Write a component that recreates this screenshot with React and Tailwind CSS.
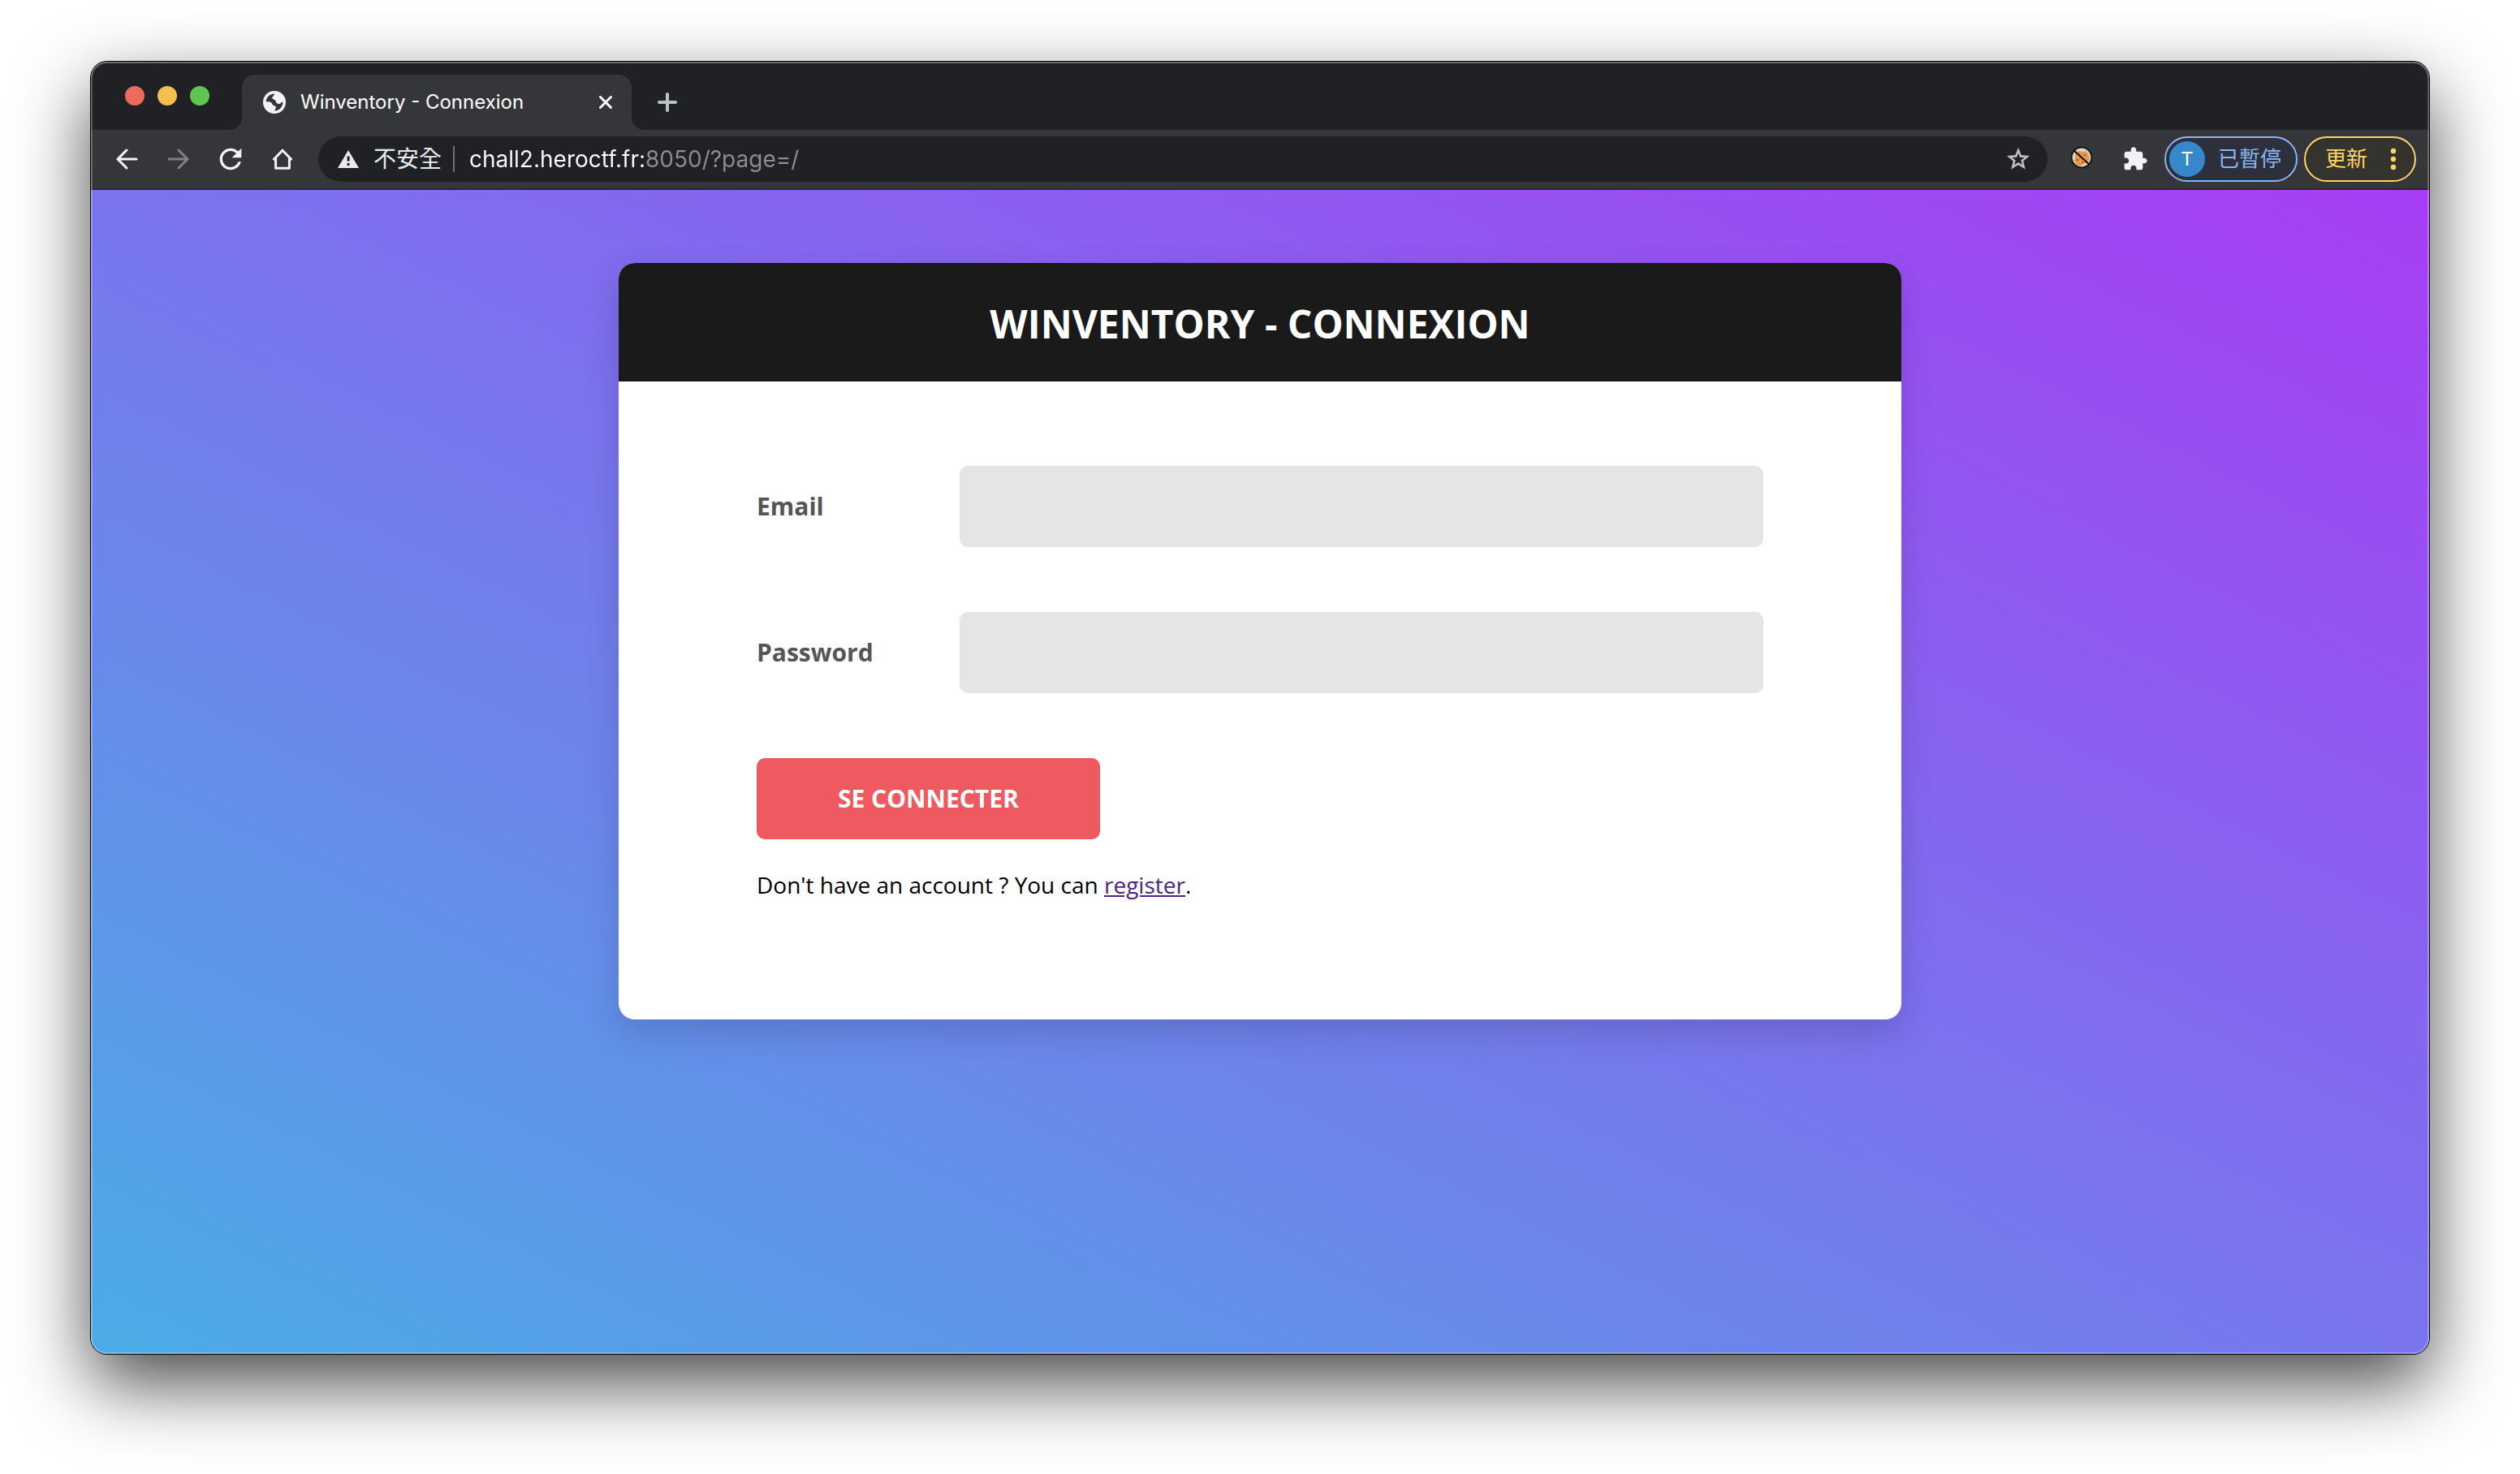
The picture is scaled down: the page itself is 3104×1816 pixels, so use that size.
const chromeFont = "font-['Inter','Noto_Sans_CJK_TC',sans-serif]";

function IconButton({ label, children }) {
  return (
    <button type="button" aria-label={label} className="flex size-16 shrink-0 items-center justify-center">
      {children}
    </button>
  );
}

function GlobeIcon() {
  return (
    <svg className="size-7 shrink-0" viewBox="0 0 86 86" aria-hidden="true">
      <circle cx="43" cy="43" r="43" fill="#f1f3f4" />
      <path
        d="M11 41C12 25 25 12 43 11C43 19 35 20 35 27C35 33 45 31 47 37C49 43 51 49 59 49C67 49 67 42 75 42C75 59 63 74 45 75C43 69 51 67 49 61C47 55 37 57 35 51C33 43 27 41 11 41Z"
        fill="#35363a"
      />
    </svg>
  );
}

function CookieIcon() {
  return (
    <svg className="size-7 shrink-0" viewBox="0 0 28 28" aria-hidden="true">
      <circle cx="14" cy="14" r="12.4" fill="#d9d6d2" stroke="#1c1410" strokeWidth="2" />
      <path d="M6 9l4-3 5 1 4-1 4 5 1 5-3 5-5 1-3 3-5-2-3-5 1-4z" fill="#e8994a" />
      <g fill="#9a5c2a">
        <circle cx="11" cy="10" r="1.3" />
        <circle cx="18" cy="11" r="1.2" />
        <circle cx="9" cy="17" r="1.3" />
        <circle cx="15" cy="20" r="1.2" />
      </g>
      <path d="M4.600 5.600L23.400 22.600" stroke="#120c08" strokeWidth="2" />
    </svg>
  );
}

function TabStrip() {
  return (
    <div className="flex h-[84px] items-end bg-[#202124]">
      <div className="flex h-[84px] items-center gap-4 pr-6 pl-[42px]">
        <button type="button" aria-label="Close window" className="size-6 rounded-full bg-[#ed6a5e]" />
        <button type="button" aria-label="Minimize window" className="size-6 rounded-full bg-[#f5bf4f]" />
        <button type="button" aria-label="Zoom window" className="size-6 rounded-full bg-[#61c554]" />
      </div>
      <div className="size-4 shrink-0 bg-[radial-gradient(circle_at_0_0,transparent_16px,#35363a_16px)]" />
      <div className="flex h-[68px] w-[480px] items-center rounded-t-[16px] bg-[#35363a] pr-6 pl-[26px]">
        <GlobeIcon />
        <span className="ml-[18px] flex-1 truncate text-[24px] leading-8 text-white">Winventory - Connexion</span>
        <button type="button" aria-label="Close tab" className="flex size-4 items-center justify-center">
          <svg className="size-4" viewBox="0 0 16 16" fill="none" stroke="#fff" strokeWidth="3" strokeLinecap="round" aria-hidden="true">
            <path d="M1.500 1.500l13 13M14.500 1.500l-13 13" />
          </svg>
        </button>
      </div>
      <div className="size-4 shrink-0 bg-[radial-gradient(circle_at_100%_0,transparent_16px,#35363a_16px)]" />
      <button type="button" aria-label="New tab" className="flex h-[68px] w-14 items-center justify-center">
        <svg className="size-6" viewBox="0 0 24 24" fill="none" stroke="#bdc1c6" strokeWidth="4" strokeLinecap="round" aria-hidden="true">
          <path d="M12 2v20M2 12h20" />
        </svg>
      </button>
    </div>
  );
}

function Toolbar() {
  return (
    <div className="flex h-[74px] items-center border-b-2 border-[#28292c] bg-[#35363a] pr-4 pl-3">
      <IconButton label="Back">
        <svg className="size-7" viewBox="0 0 28 28" fill="none" stroke="#f1f3f4" strokeWidth="3" strokeLinecap="round" aria-hidden="true">
          <path d="M14 3L3 14l11 11M3 14h23" />
        </svg>
      </IconButton>
      <IconButton label="Forward">
        <svg className="size-7" viewBox="0 0 28 28" fill="none" stroke="#808184" strokeWidth="3" strokeLinecap="round" aria-hidden="true">
          <path d="M14 3l11 11-11 11M25 14H2" />
        </svg>
      </IconButton>
      <IconButton label="Reload">
        <svg className="size-10" viewBox="0 0 24 24" fill="#f1f3f4" aria-hidden="true">
          <path d="M17.65 6.35C16.2 4.9 14.21 4 12 4c-4.42 0-7.99 3.58-7.99 8s3.57 8 7.99 8c3.73 0 6.84-2.55 7.73-6h-2.08c-.82 2.33-3.04 4-5.65 4-3.31 0-6-2.69-6-6s2.69-6 6-6c1.66 0 3.14.69 4.22 1.78L13 11h7V4l-2.35 2.35z" />
        </svg>
      </IconButton>
      <IconButton label="Home">
        <svg className="size-7" viewBox="0 0 28 28" fill="none" stroke="#f1f3f4" strokeWidth="3" strokeLinejoin="round" aria-hidden="true">
          <path d="M2.6 15L14 3.2L25.4 15M5.6 12.8V25.2H22.4V12.8" />
        </svg>
      </IconButton>

      <div className="ml-3 flex h-14 flex-1 items-center rounded-full bg-[#202124] pr-[22px] pl-6">
        <svg className="size-[26px] shrink-0" viewBox="0 0 26 26" aria-hidden="true">
          <path d="M13 2L26 24H0z" fill="#e8eaed" />
          <path d="M11.6 9.5h3v6h-3zM11.6 18h3v3h-3z" fill="#202124" />
        </svg>
        <span className="ml-[18px] text-[28px] leading-10 whitespace-nowrap text-[#e8eaed]">不安全</span>
        <span className="ml-[14px] h-8 w-0.5 bg-[#6f7073]" />
        <input
          aria-label="Address"
          defaultValue="chall2.heroctf.fr:8050/?page=/"
          className="ml-[18px] h-10 min-w-0 flex-1 bg-[linear-gradient(90deg,#fff_216px,#8d8e91_216px)] bg-clip-text text-[28px] leading-10 text-transparent outline-none"
        />
        <button type="button" aria-label="Bookmark this page">
          <svg className="size-7" viewBox="0 0 28 28" fill="none" stroke="#bdc1c6" strokeWidth="2.6" aria-hidden="true">
            <path d="M14 3.2L16.9 10.4L24.8 11L18.8 16L20.7 23.8L14 19.6L7.3 23.8L9.2 16L3.2 11L11.1 10.4Z" />
          </svg>
        </button>
      </div>

      <button type="button" aria-label="Cookie blocker" className="ml-7 pb-1">
        <CookieIcon />
      </button>
      <button type="button" aria-label="Extensions" className="ml-9">
        <svg className="size-8" viewBox="0 0 24 24" fill="#f1f3f4" aria-hidden="true">
          <path d="M20.5 11H19V7c0-1.1-.9-2-2-2h-4V3.500C13 2.120 11.880 1 10.500 1S8 2.120 8 3.500V5H4c-1.100 0-1.990.9-1.990 2v3.800H3.500c1.490 0 2.700 1.210 2.700 2.700s-1.210 2.700-2.700 2.700H2V20c0 1.100.9 2 2 2h3.800v-1.500c0-1.490 1.210-2.700 2.700-2.700s2.700 1.210 2.700 2.700V22H17c1.100 0 2-.9 2-2v-4h1.500c1.380 0 2.500-1.120 2.500-2.500S21.880 11 20.500 11z" />
        </svg>
      </button>
      <button type="button" className="ml-5 flex h-14 items-center rounded-full border-2 border-[#8ab4f8] bg-[#2d303b] pr-[18px] pl-1">
        <span className="flex size-11 items-center justify-center rounded-full bg-[#3788cb] font-['Roboto',sans-serif] text-[24px] leading-8 text-white">T</span>
        <span className="ml-4 text-[26px] leading-10 whitespace-nowrap text-[#8ab4f8]">已暫停</span>
      </button>
      <button type="button" className="ml-2 flex h-14 items-center rounded-full border-2 border-[#fdd663] bg-[#35332d] pr-[22px] pl-6">
        <span className="text-[26px] leading-10 whitespace-nowrap text-[#fdd663]">更新</span>
        <svg className="ml-7 h-7 w-2" viewBox="0 0 8 28" fill="#fdd663" aria-hidden="true">
          <circle cx="4" cy="4" r="3.200" />
          <circle cx="4" cy="14" r="3.200" />
          <circle cx="4" cy="24" r="3.200" />
        </svg>
      </button>
    </div>
  );
}

function Field({ id, label, type }) {
  return (
    <div className="flex items-center">
      <label htmlFor={id} className="w-[250px] shrink-0 text-[30px] leading-10 font-bold text-[#555]">
        {label}
      </label>
      <input id={id} name={id} type={type} className="h-[100px] min-w-0 flex-1 rounded-[10px] bg-[#e5e5e5] px-9 text-[30px] text-[#555] outline-none" />
    </div>
  );
}

function LoginCard() {
  return (
    <section className="mx-auto w-full max-w-[1580px] rounded-[20px] bg-white shadow-[0_16px_40px_rgba(0,0,0,0.15)]">
      <header className="rounded-t-[20px] bg-[#1a1a1a] pt-10 pb-9">
        <h1 className="text-center text-[48px] leading-[70px] font-bold text-white uppercase">Winventory - Connexion</h1>
      </header>
      <form className="flex flex-col gap-20 px-[170px] pt-[104px] pb-[146px]" onSubmit={(e) => e.preventDefault()}>
        <Field id="email" label="Email" type="email" />
        <Field id="password" label="Password" type="password" />
        <div>
          <button type="submit" className="h-[100px] rounded-[10px] bg-[#ee5a60] px-[100px] text-[30px] leading-10 font-bold text-white uppercase">
            Se connecter
          </button>
          <p className="mt-9 text-[28px] leading-10 text-black">
            Don't have an account ? You can{" "}
            <a href="#register" className="text-[#4c2583] underline">
              register
            </a>
            .
          </p>
        </div>
      </form>
    </section>
  );
}

export default function App() {
  return (
    <div className="flex min-h-screen flex-col bg-white px-28 pt-[76px] pb-[148px]">
      <div className="relative flex flex-1 flex-col overflow-hidden rounded-[20px] shadow-[0_0_0_1px_#000,0_36px_90px_rgba(0,0,0,0.72)]">
        <div className={chromeFont}>
          <TabStrip />
          <Toolbar />
        </div>
        <main className="flex-1 bg-[linear-gradient(to_top_right,#4bace5,#a73df5)] px-10 py-[90px] font-['Open_Sans',sans-serif]">
          <LoginCard />
        </main>
        <div className="pointer-events-none absolute inset-0 rounded-[20px] shadow-[inset_0_0_0_2px_rgba(255,255,255,0.22),inset_0_1px_0_1px_rgba(255,255,255,0.15)]" />
      </div>
    </div>
  );
}
